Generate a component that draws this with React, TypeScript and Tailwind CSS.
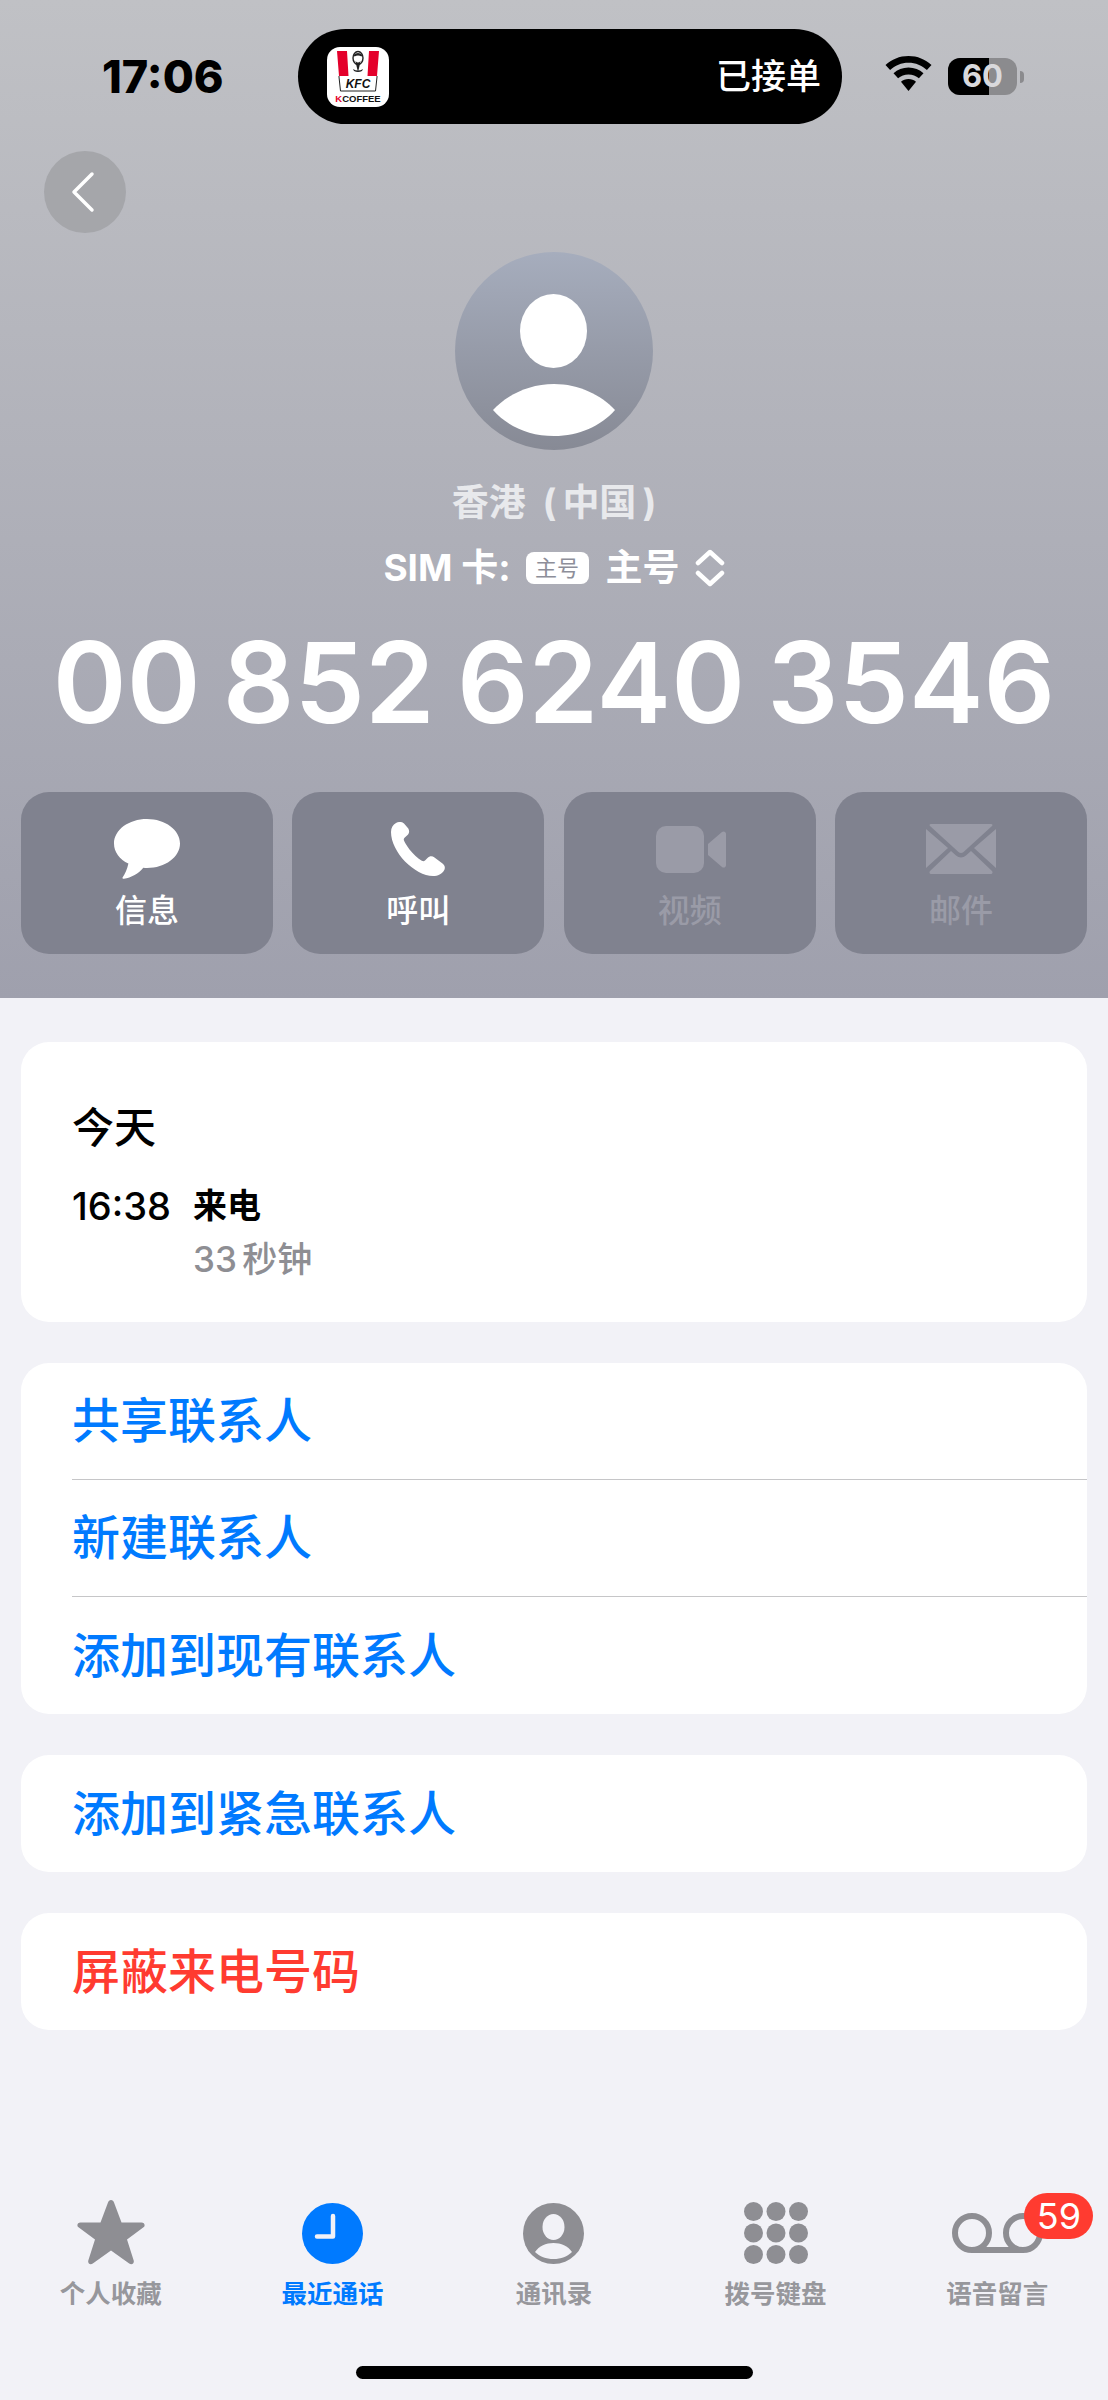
import React from 'react';

const ActionButton = ({ label, dim, children }: { label: string; dim?: boolean; children: React.ReactNode }) => (
  <div className="flex h-[162px] w-[252px] flex-col items-center rounded-[28px] bg-[#80828f]">
    <div className="flex h-[96px] w-full items-center justify-center pt-[18px]">{children}</div>
    <span className={`mt-[3px] text-[32px] leading-[40px] font-medium ${dim ? 'text-[#9a9ba7]' : 'text-white'}`}>{label}</span>
  </div>
);

const LinkRow = ({ label, red, divider }: { label: string; red?: boolean; divider?: boolean }) => (
  <div className="pl-[51px]">
    <div className={`flex h-[117px] items-center text-[48px] font-medium ${red ? 'text-[#ff3b30]' : 'text-[#007aff]'} ${divider ? 'border-b border-[#c6c6c8]' : ''}`}>
      {label}
    </div>
  </div>
);

const Tab = ({ label, active, children }: { label: string; active?: boolean; children: React.ReactNode }) => (
  <div className="relative flex flex-col items-center">
    <div className="flex h-[72px] items-center justify-center">{children}</div>
    <span className={`mt-[8px] text-[25.5px] leading-[34px] font-semibold ${active ? 'text-[#007aff]' : 'text-[#97979c]'}`}>{label}</span>
  </div>
);

function KfcLogo() {
  return (
    <svg width="62" height="60" viewBox="0 0 62 60">
      <rect width="62" height="60" rx="13" fill="#fff" />
      <path d="M10 4h10l1.500 25H12zM42 4h10l-2 25h-9.500z" fill="#e4002b" />
      <ellipse cx="31" cy="11" rx="5" ry="6.500" fill="#fff" stroke="#222" strokeWidth="1.400" />
      <path d="M26.500 8q4.500-4 9 0l-1 1.500q-3.500-2-7 0zM28.500 14q2.500 3 5 0l-1 5-1.500 6-1.500-6z" fill="#222" />
      <path d="M26 22q5 3 10 0l-1 2q-4 2-8 0z" fill="#222" />
      <path d="M12 29v1l1.500 14h35L50 30v-1" fill="none" stroke="#222" strokeWidth="1" />
      <text x="31" y="41" textAnchor="middle" fontSize="12" fontWeight="800" fontStyle="italic" fill="#111" fontFamily="Liberation Sans, sans-serif">KFC</text>
      <text x="31" y="55" textAnchor="middle" fontSize="9.500" fontWeight="800" fill="#111" fontFamily="Liberation Sans, sans-serif">
        <tspan fill="#e4002b">K</tspan>COFFEE
      </text>
    </svg>
  );
}

export default function App() {
  return (
    <div className="flex h-[2400px] w-[1108px] flex-col overflow-hidden bg-[#f2f2f7] font-['Inter','Noto_Sans_CJK_SC',sans-serif]">
      <div className="h-[998px] shrink-0 bg-gradient-to-b from-[#c0c1c5] to-[#9fa0ad]">
        {/* status bar */}
        <div className="flex items-center pt-[29px]">
          <span className="w-[298px] pl-[102px] text-[45px] leading-[95px] font-extrabold text-black">17:06</span>
          <div className="flex h-[95px] w-[544px] items-center justify-between rounded-[48px] bg-black pr-[21px] pl-[29px]">
            <KfcLogo />
            <span className="text-[35px] font-medium text-white">已接单</span>
          </div>
          <div className="ml-[43px] flex items-center">
            <svg width="47" height="36" viewBox="0 0 47 36" className="mb-[6px]">
              <path d="M23.5 0C14.5 0 6.6 3.4 0.5 9l4.6 5C10 9.400 16.400 6.700 23.500 6.700S37 9.400 41.900 14l4.600-5C40.400 3.400 32.500 0 23.500 0z" fill="#000" />
              <path d="M23.500 11.500c-5.800 0-11 2.200-15 5.800l4.600 5c2.800-2.400 6.400-3.900 10.400-3.900s7.600 1.500 10.400 3.900l4.600-5c-4-3.600-9.200-5.800-15-5.800z" fill="#000" />
              <path d="M23.500 23c-2.900 0-5.500 1-7.500 2.800L23.500 35 31 25.800C29 24 26.400 23 23.500 23z" fill="#000" />
            </svg>
            <div className="relative ml-[16px] flex h-[37px] w-[69px] overflow-hidden rounded-[12px] bg-[#8b8b8e]">
              <div className="h-full w-[41px] bg-black" />
              <span className="absolute inset-0 flex items-center justify-center text-[31px] font-bold text-[#d9d9dc]">60</span>
            </div>
            <div className="ml-[3px] h-[12px] w-[4px] rounded-r-full bg-[#8b8b8e]" />
          </div>
        </div>

        {/* back */}
        <div className="mt-[27px] ml-[44px] flex h-[82px] w-[82px] items-center justify-center rounded-full bg-[#a5a6aa]">
          <svg width="24" height="42" viewBox="0 0 24 42" fill="none" stroke="#fff" strokeWidth="3.5" strokeLinecap="round" strokeLinejoin="round" className="mr-[4px]">
            <path d="M21 3 3 21l18 18" />
          </svg>
        </div>

        {/* contact */}
        <div className="flex flex-col items-center">
          <div className="mt-[19px] h-[198px] w-[198px] overflow-hidden rounded-full bg-gradient-to-b from-[#a6adbd] to-[#878a95]">
            <svg width="198" height="198" viewBox="0 0 198 198">
              <ellipse cx="98.500" cy="79" rx="33.500" ry="37" fill="#fff" />
              <path d="M38 158c14-15 36-26 61-26s47 11 61 26c-14 16-36 26-61 26s-47-10-61-26z" fill="#fff" />
            </svg>
          </div>
          <div className="mt-[28px] text-[37px] leading-[50px] font-bold text-[#e8e9ec] [word-spacing:8px]">
            香港 <span className="mr-[6px]">(</span>中国<span className="ml-[6px]">)</span>
          </div>
          <div className="mt-[17px] flex h-[46px] items-center text-[37px] font-bold text-white">
            <span>SIM 卡:</span>
            <span className="ml-[15px] flex h-[32px] w-[63px] items-center justify-center rounded-[8px] bg-white text-[22px] font-normal text-[#8d8e99]">主号</span>
            <span className="ml-[17px]">主号</span>
            <svg width="30" height="40" viewBox="0 0 30 40" fill="none" stroke="#fff" strokeWidth="4.500" strokeLinecap="round" strokeLinejoin="round" className="ml-[15px]">
              <path d="M3 15 15 4l12 11M3 25l12 11 12-11" />
            </svg>
          </div>
          <div className="mt-[26px] text-[112px] leading-[130px] font-semibold whitespace-nowrap text-white [word-spacing:-6px]">00 852 6240 3546</div>
        </div>

        {/* actions */}
        <div className="mt-[45px] flex justify-between px-[21px]">
          <ActionButton label="信息">
            <svg width="66" height="60" viewBox="0 0 66 60" fill="#fff">
              <path d="M33 0C14.800 0 0 10.800 0 24.500 0 33 5.700 40.400 14.400 44.600 13.300 50 11 55.300 8.700 58.300 8 59.300 8.800 60 10 59.800 17 58.800 25 54.500 29.300 48.800 30.500 48.900 31.800 49 33 49 51.200 49 66 38.100 66 24.500S51.200 0 33 0z" />
            </svg>
          </ActionButton>
          <ActionButton label="呼叫">
            <svg width="54" height="54" viewBox="0 0 54 54" fill="#fff">
              <path d="M5 1C2 2.500 0 6 0 10c0 10 6 21 14 29.500C22.500 48 33 54 42 54c5 0 9-2 11-5.500 1.500-2.500 1-5-1.500-7l-8-6c-2.500-2-5-1.500-7 .5l-2.500 2.500c-1 1-2 1-3.200.3C27 36.500 22 32 18.500 27.500 15.500 23.500 13.500 20 13 18.500c-.5-1.200-.3-2 .8-3l2.500-2.200c2-2 2.400-4.300 1-6.800L13 1.500C11 -.5 8 -.5 5 1z" />
            </svg>
          </ActionButton>
          <ActionButton label="视频" dim>
            <svg width="70" height="47" viewBox="0 0 70 47" fill="#9a9ba7" className="ml-[3px]">
              <rect width="48" height="47" rx="10" />
              <path d="M52 18 66 6c1.500-1.200 4-.5 4 2v31c0 2.500-2.500 3.200-4 2L52 29z" />
            </svg>
          </ActionButton>
          <ActionButton label="邮件" dim>
            <svg width="70" height="50" viewBox="0 0 70 50" fill="#9a9ba7">
              <path d="M5 0h60c1.500 0 2 1 1 2L37.500 28c-1.500 1.300-3.500 1.300-5 0L4 2C3 1 3.500 0 5 0z" />
              <path d="M0 5 22 24 0 44zM70 5 48 24l22 20z" />
              <path d="M25 27l5 4.500c3 2.500 7 2.500 10 0l5-4.500 21 20c1 1 .5 3-1 3H5c-1.500 0-2-2-1-3z" />
            </svg>
          </ActionButton>
        </div>
      </div>

      <div className="flex flex-col gap-[41px] px-[21px] pt-[44px]">
        <div className="h-[280px] rounded-[28px] bg-white pt-[60px] pl-[51px]">
          <div className="text-[42px] leading-[52px] font-medium text-black">今天</div>
          <div className="mt-[28px] flex">
            <span className="w-[121px] text-[38px] leading-[48px] font-medium text-black">16:38</span>
            <div className="flex flex-col">
              <span className="text-[34px] leading-[48px] font-bold text-black">来电</span>
              <span className="mt-[5px] text-[35px] leading-[48px] font-medium text-[#8e8e93] [word-spacing:-4px]">33 秒钟</span>
            </div>
          </div>
        </div>

        <div className="rounded-[28px] bg-white">
          <LinkRow label="共享联系人" divider />
          <LinkRow label="新建联系人" divider />
          <LinkRow label="添加到现有联系人" />
        </div>

        <div className="rounded-[28px] bg-white">
          <LinkRow label="添加到紧急联系人" />
        </div>

        <div className="rounded-[28px] bg-white">
          <LinkRow label="屏蔽来电号码" red />
        </div>
      </div>

      {/* tab bar */}
      <div className="mt-auto grid grid-cols-5">
        <Tab label="个人收藏">
          <svg width="68" height="66" viewBox="0 0 68 66" fill="#8e8e93">
            <path d="M34 0c1.500 0 2.500 1 3 2.500l7.500 20h20c3 0 4.200 3 2 4.800L50 39.500l6.700 21c.8 3-2 4.800-4.500 3L34 50.500l-18.200 13c-2.500 1.800-5.300 0-4.500-3l6.700-21L1.500 27.300c-2.200-1.800-1-4.800 2-4.800h20L31 2.500C31.500 1 32.500 0 34 0z" />
          </svg>
        </Tab>
        <Tab label="最近通话" active>
          <svg width="61" height="61" viewBox="0 0 61 61">
            <circle cx="30.500" cy="30.500" r="30.500" fill="#007aff" />
            <path d="M31 13v20.500H15" fill="none" stroke="#f2f2f7" strokeWidth="4.500" strokeLinecap="round" strokeLinejoin="round" />
          </svg>
        </Tab>
        <Tab label="通讯录">
          <svg width="61" height="61" viewBox="0 0 61 61">
            <circle cx="30.500" cy="30.500" r="30.500" fill="#8e8e93" />
            <ellipse cx="30.500" cy="24" rx="11" ry="13" fill="#f2f2f7" />
            <path d="M12 49c4-6 11-9 18.500-9S45 43 49 49c-4.500 4.500-11 7-18.500 7S16.500 53.500 12 49z" fill="#f2f2f7" />
          </svg>
        </Tab>
        <Tab label="拨号键盘">
          <svg width="64" height="62" viewBox="0 0 64 62" fill="#8e8e93">
            {[9.5, 32, 54.5].map((cx) =>
              [9.500, 31, 52.500].map((cy) => <ellipse key={`${cx}-${cy}`} cx={cx} cy={cy} rx="9.500" ry="9.500" />)
            )}
          </svg>
        </Tab>
        <Tab label="语音留言">
          <svg width="91" height="40" viewBox="0 0 91 40" fill="none" stroke="#8e8e93" strokeWidth="6">
            <circle cx="20" cy="20" r="17" />
            <circle cx="71" cy="20" r="17" />
            <path d="M20 37h51" />
          </svg>
          <span className="absolute top-[-4px] left-[138px] flex h-[46px] w-[69px] items-center justify-center rounded-[23px] bg-[#ff3b30] text-[36px] font-normal text-white">59</span>
        </Tab>
      </div>
      <div className="mt-[55px] mb-[21px] flex justify-center">
        <div className="h-[13px] w-[397px] rounded-full bg-black" />
      </div>
    </div>
  );
}
